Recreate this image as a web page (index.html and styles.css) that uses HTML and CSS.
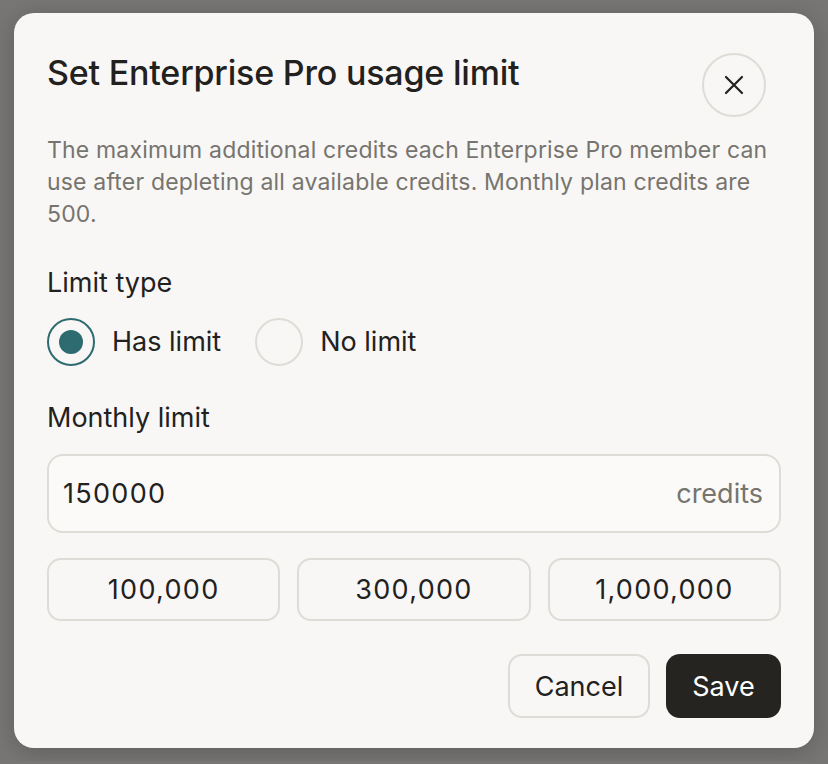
FILE: index.html
```html
<!DOCTYPE html>
<html lang="en">
<head>
  <meta charset="UTF-8">
  <meta name="viewport" content="width=device-width, initial-scale=1.0">
  <title>Set usage limit</title>
  <link rel="stylesheet" href="styles.css">
</head>
<body>
  <div class="dialog">
    <div class="dialog-header">
      <h1>Set Enterprise Pro usage limit</h1>
      <button class="close-btn" aria-label="Close">
        <svg width="20" height="20" viewBox="0 0 20 20" fill="none" stroke="#22211e" stroke-width="2.2" stroke-linecap="round">
          <path d="M2 2l16 16M18 2L2 18"/>
        </svg>
      </button>
    </div>

    <p class="description">The maximum additional credits each Enterprise Pro member can use after depleting all available credits. Monthly plan credits are 500.</p>

    <div class="field-label">Limit type</div>
    <div class="radio-row">
      <label class="radio checked"><span class="radio-dot"></span>Has limit</label>
      <label class="radio"><span class="radio-dot"></span>No limit</label>
    </div>

    <div class="field-label monthly">Monthly limit</div>
    <div class="limit-input">
      <span class="value">150000</span>
      <span class="unit">credits</span>
    </div>

    <div class="presets">
      <button class="preset">100,000</button>
      <button class="preset">300,000</button>
      <button class="preset">1,000,000</button>
    </div>

    <div class="actions">
      <button class="btn-cancel">Cancel</button>
      <button class="btn-save">Save</button>
    </div>
  </div>
</body>
</html>
```

FILE: styles.css
```css
body {
  font-family: 'Inter', 'Liberation Sans', sans-serif;
  margin: 0;
  padding: 13px 14px;
  background-color: #777674;
  color: #22211e;
}

.dialog {
  width: 800px;
  height: 735px;
  box-sizing: border-box;
  padding: 40px 33px 32px;
  background-color: #f8f7f5;
  border-radius: 20px;
  box-shadow: 0 4px 24px rgba(0, 0, 0, 0.2);
}

.dialog-header {
  display: flex;
  justify-content: space-between;
  align-items: flex-start;
}

h1 {
  margin: 0;
  font-size: 34px;
  line-height: 40px;
  font-weight: 500;
  letter-spacing: -0.2px;
}

.close-btn {
  width: 64px;
  height: 64px;
  margin-right: 15px;
  border: 2px solid #dedcd6;
  border-radius: 50%;
  background: transparent;
  display: flex;
  align-items: center;
  justify-content: center;
  padding: 0;
}

.description {
  margin: 17px 0 0;
  font-size: 23px;
  line-height: 32px;
  letter-spacing: 0.18px;
  color: #76746f;
}

.field-label {
  margin-top: 37px;
  font-size: 27px;
  line-height: 32px;
}

.field-label.monthly {
  margin-top: 36px;
}

.radio-row {
  display: flex;
  gap: 34px;
  margin-top: 19px;
}

.radio {
  display: flex;
  align-items: center;
  gap: 17px;
  font-size: 27px;
  line-height: 48px;
}

.radio-dot {
  width: 48px;
  height: 48px;
  box-sizing: border-box;
  border: 2px solid #dedcd6;
  border-radius: 50%;
  display: flex;
  align-items: center;
  justify-content: center;
}

.radio.checked .radio-dot {
  border-color: #2e6b70;
}

.radio.checked .radio-dot::after {
  content: '';
  width: 24px;
  height: 24px;
  border-radius: 50%;
  background-color: #2e6b70;
}

.limit-input {
  margin-top: 20px;
  height: 79px;
  box-sizing: border-box;
  padding: 0 16px 0 14px;
  border: 2px solid #dedcd6;
  border-radius: 16px;
  background-color: #fbfaf8;
  display: flex;
  align-items: center;
  justify-content: space-between;
  font-size: 27px;
}

.limit-input .value {
  letter-spacing: 1.3px;
}

.limit-input .unit {
  color: #76746f;
}

.presets {
  display: grid;
  grid-template-columns: repeat(3, 1fr);
  gap: 17px;
  margin-top: 25px;
}

button {
  font-family: inherit;
  cursor: pointer;
}

.preset {
  height: 63px;
  border: 2px solid #dedcd6;
  border-radius: 14px;
  background-color: #f8f7f5;
  font-size: 27px;
  letter-spacing: 1.3px;
  color: #22211e;
}

.actions {
  display: flex;
  justify-content: flex-end;
  gap: 16px;
  margin-top: 33px;
}

.btn-cancel, .btn-save {
  height: 64px;
  padding: 0;
  border-radius: 14px;
  font-size: 27px;
}

.btn-cancel {
  width: 142px;
  border: 2px solid #dedcd6;
  background-color: #f8f7f5;
  color: #22211e;
}

.btn-save {
  width: 115px;
  border: none;
  background-color: #262420;
  color: #fff;
}
```
